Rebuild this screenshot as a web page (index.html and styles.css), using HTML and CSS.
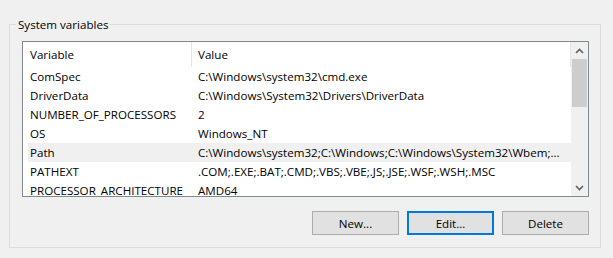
FILE: index.html
```html
<!DOCTYPE html>
<html>
<head>
<meta charset="utf-8">
<link rel="stylesheet" href="styles.css">
</head>
<body>
<div class="page">
  <fieldset class="group">
    <legend class="group-title">System variables</legend>
    <div class="list">
      <div class="list-main">
        <div class="list-header">
          <div class="hcell hcell-var">Variable</div>
          <div class="hcell hcell-val">Value</div>
        </div>
        <div class="rows">
          <div class="row"><span class="c-var">ComSpec</span><span class="c-val">C:\Windows\system32\cmd.exe</span></div>
          <div class="row"><span class="c-var">DriverData</span><span class="c-val">C:\Windows\System32\Drivers\DriverData</span></div>
          <div class="row"><span class="c-var">NUMBER_OF_PROCESSORS</span><span class="c-val">2</span></div>
          <div class="row"><span class="c-var">OS</span><span class="c-val">Windows_NT</span></div>
          <div class="row row-sel"><span class="c-var">Path</span><span class="c-val">C:\Windows\system32;C:\Windows;C:\Windows\System32\Wbem;...</span></div>
          <div class="row"><span class="c-var">PATHEXT</span><span class="c-val">.COM;.EXE;.BAT;.CMD;.VBS;.VBE;.JS;.JSE;.WSF;.WSH;.MSC</span></div>
          <div class="row"><span class="c-var">PROCESSOR_ARCHITECTURE</span><span class="c-val">AMD64</span></div>
        </div>
      </div>
      <div class="scrollbar">
        <div class="sb-btn">
          <svg width="9" height="6" viewBox="0 0 9 6"><polyline points="1,5 4.5,1.5 8,5" fill="none" stroke="#606060" stroke-width="1.6"/></svg>
        </div>
        <div class="sb-track"><div class="sb-thumb"></div></div>
        <div class="sb-btn">
          <svg width="9" height="6" viewBox="0 0 9 6"><polyline points="1,1 4.5,4.5 8,1" fill="none" stroke="#606060" stroke-width="1.6"/></svg>
        </div>
      </div>
    </div>
    <div class="buttons">
      <button class="btn">New...</button>
      <button class="btn btn-default">Edit...</button>
      <button class="btn">Delete</button>
    </div>
  </fieldset>
</div>
</body>
</html>
```
FILE: styles.css
```css
html, body {
  margin: 0;
  background: #f0f0f0;
}
body {
  font-family: "Open Sans", "Noto Sans", sans-serif;
  font-size: 11.6px;
  color: #000;
}
.page {
  padding: 17px 12px 0 9px;
}
.group {
  margin: 0;
  width: 592px;
  box-sizing: border-box;
  border: 1px solid #dcdcdc;
  padding: 9px 11px 12px 12px;
  min-inline-size: 0;
}
.group-title {
  padding: 0 2px;
  margin-left: -6px;
  line-height: 15px;
  height: 15px;
}
.list {
  height: 156px;
  box-sizing: border-box;
  border: 1px solid #828790;
  background: #fff;
  display: grid;
  grid-template-columns: 1fr 17px;
  overflow: hidden;
}
.list-main {
  display: flex;
  flex-direction: column;
  overflow: hidden;
  min-width: 0;
}
.list-header {
  display: grid;
  grid-template-columns: 169px 1fr;
  height: 25px;
  flex: none;
}
.hcell {
  border-right: 1px solid #e5e5e5;
  line-height: 25px;
  white-space: nowrap;
}
.hcell-var { padding-left: 7px; }
.hcell-val { padding-left: 6px; }
.rows {
  flex: 1;
  overflow: hidden;
}
.row {
  display: grid;
  grid-template-columns: 164px 1fr;
  height: 19px;
  line-height: 19px;
  margin-left: 5px;
  white-space: nowrap;
}
.row-sel {
  background: #f0f0f0;
}
.c-var { padding-left: 2px; overflow: hidden; }
.c-val { padding-left: 6px; overflow: hidden; }
.scrollbar {
  background: #f0f0f0;
  display: flex;
  flex-direction: column;
}
.sb-btn {
  height: 17px;
  flex: none;
  display: flex;
  align-items: center;
  justify-content: center;
}
.sb-track {
  flex: 1;
}
.sb-thumb {
  margin: 0 1px;
  height: 48px;
  background: #cdcdcd;
}
.buttons {
  display: flex;
  justify-content: flex-end;
  gap: 8px;
  margin-top: 14px;
}
.btn {
  width: 87px;
  height: 24px;
  box-sizing: border-box;
  border: 1px solid #adadad;
  background: #e1e1e1;
  font-family: inherit;
  font-size: 11.6px;
  color: #000;
  padding: 0;
  border-radius: 0;
}
.btn-default {
  border: 2px solid #0078d7;
}
```
